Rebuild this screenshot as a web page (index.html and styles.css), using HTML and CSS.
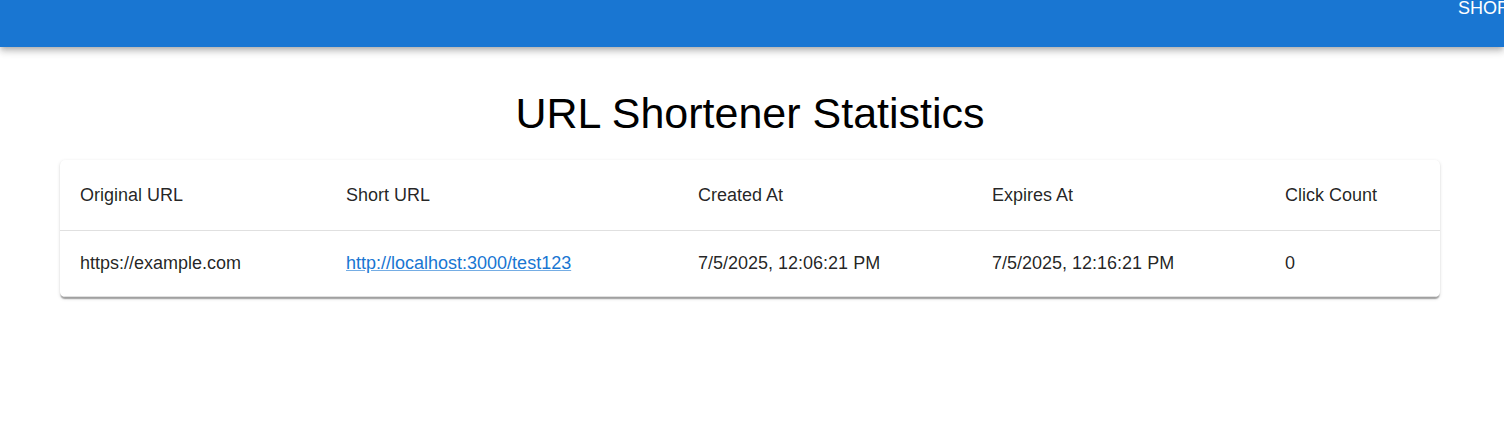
FILE: index.html
```html
<!DOCTYPE html>
<html lang="en">
<head>
<meta charset="utf-8">
<title>URL Shortener Statistics</title>
<link rel="stylesheet" href="styles.css">
</head>
<body>
<header class="appbar">
  <div class="toolbar">
    <nav class="nav">
      <a class="nav-btn" href="#">Shorten URL</a>
      <a class="nav-btn" href="#">Statistics</a>
    </nav>
  </div>
</header>
<main class="container">
  <h1 class="title">URL Shortener Statistics</h1>
  <div class="paper">
    <table class="table">
      <colgroup>
        <col class="c1"><col class="c2"><col class="c3"><col class="c4"><col class="c5">
      </colgroup>
      <thead>
        <tr>
          <th>Original URL</th>
          <th>Short URL</th>
          <th>Created At</th>
          <th>Expires At</th>
          <th>Click Count</th>
        </tr>
      </thead>
      <tbody>
        <tr>
          <td>https://example.com</td>
          <td><a class="link" href="#">http://localhost:3000/test123</a></td>
          <td>7/5/2025, 12:06:21 PM</td>
          <td>7/5/2025, 12:16:21 PM</td>
          <td>0</td>
        </tr>
      </tbody>
    </table>
  </div>
</main>
</body>
</html>
```

FILE: styles.css
```css
* { box-sizing: border-box; }
html, body { margin: 0; padding: 0; }
body {
  background: #fff;
  font-family: "Liberation Sans", Arial, sans-serif;
  color: rgba(0,0,0,0.87);
  overflow: hidden;
  width: 1504px;
  height: 442px;
}
.appbar {
  height: 47px;
  background: #1976d2;
  color: #fff;
  overflow: hidden;
  position: relative;
  z-index: 2;
  box-shadow: 0 2.5px 5px -1.25px rgba(0,0,0,0.2), 0 5px 6px 0 rgba(0,0,0,0.14), 0 1.25px 12px 0 rgba(0,0,0,0.12);
}
.toolbar {
  display: flex;
  align-items: flex-start;
  height: 100%;
}
.nav {
  display: flex;
  flex: 0 0 auto;
  gap: 30px;
  margin-left: 1458px;
  margin-top: -1px;
}
.nav-btn {
  color: #fff;
  text-decoration: none;
  text-transform: uppercase;
  font-size: 18px;
  line-height: 18px;
  white-space: nowrap;
}
.container {
  padding: 0 64px 0 60px;
}
.title {
  margin: 40px 0 21px;
  font-weight: 400;
  font-size: 43px;
  line-height: 52px;
  text-align: center;
  color: #000;
}
.paper {
  background: #fff;
  border-radius: 5px;
  overflow: hidden;
  box-shadow: 0 2.5px 1.25px -1.25px rgba(0,0,0,0.2), 0 1.25px 1.25px 0 rgba(0,0,0,0.14), 0 1.25px 3.75px 0 rgba(0,0,0,0.12);
}
.table {
  width: 100%;
  border-collapse: collapse;
  table-layout: fixed;
  font-size: 18px;
}
.c1 { width: 266px; }
.c2 { width: 352px; }
.c3 { width: 294px; }
.c4 { width: 293px; }
.c5 { width: auto; }
th, td {
  text-align: left;
  padding: 20px;
  border-bottom: 1.25px solid rgb(224,224,224);
  color: rgba(0,0,0,0.87);
  white-space: nowrap;
}
th {
  font-weight: 400;
  line-height: 30px;
}
td {
  line-height: 25px;
}
.link {
  color: #1976d2;
  text-decoration: underline;
  text-decoration-color: rgba(25,118,210,0.6);
}
```
